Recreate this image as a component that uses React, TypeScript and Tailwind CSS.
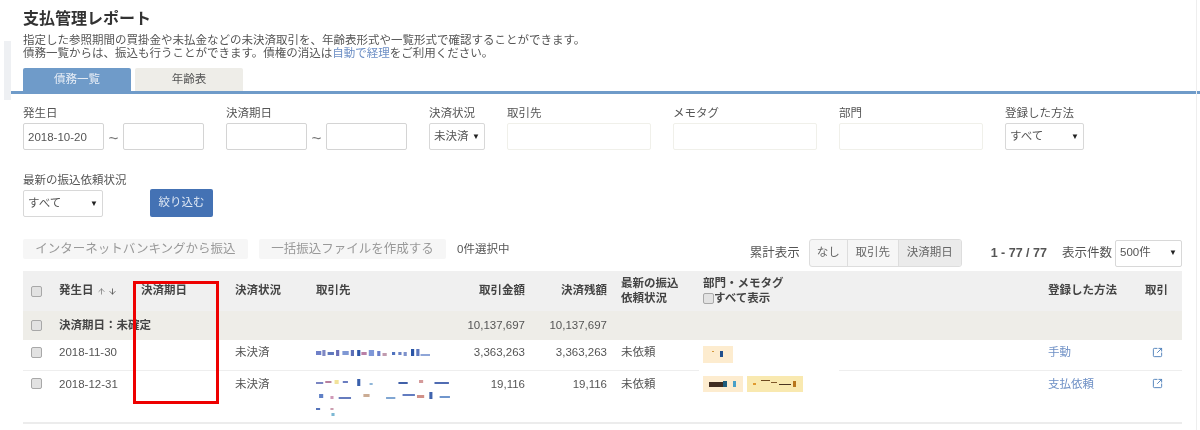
import { ArrowDown, ArrowUp, SquareArrowOutUpRight } from "lucide-react";

type Block = [number, number, number, number, string];

const nameOne: Block[] = [
  [0, 2, 5, 4, "#6f80c8"], [6, 1, 3, 6, "#7f88c4"], [11, 3, 6, 3, "#5f78bc"], [19, 1, 3, 6, "#6b70b8"],
  [25, 2, 6, 4, "#7f98d4"], [33, 1, 3, 6, "#5d70b8"], [39, 1, 3, 6, "#2f58a8"], [43, 3, 5, 3, "#b97fa6"],
  [50, 1, 5, 6, "#7f98d8"], [58, 2, 3, 5, "#6c80ca"], [63, 4, 4, 3, "#c09aae"], [72, 3, 3, 3, "#4f72be"],
  [78, 3, 3, 3, "#6b82c2"], [83, 3, 3, 4, "#7e92cc"], [90, 0, 3, 7, "#2a55a6"], [95, 0, 3, 7, "#5d78be"],
  [99, 5, 9, 2, "#8fa6d8"],
];

const nameTwo: Block[] = [
  [0, 4, 7, 2, "#7a85c2"], [9, 3, 6, 2, "#b8809e"], [18, 2, 4, 4, "#f2e29a"], [26, 3, 5, 2, "#6a7dc0"],
  [40, 1, 3, 7, "#3a60ac"], [52, 5, 3, 2, "#8fb6d8"], [80, 4, 9, 2, "#4060a8"], [100, 2, 4, 3, "#d49a9a"],
  [115, 4, 14, 2, "#506cb2"], [3, 16, 4, 4, "#5f80c6"], [14, 18, 3, 3, "#d09ab8"], [22, 19, 12, 2, "#667cbe"],
  [46, 16, 6, 3, "#cbac94"], [68, 19, 9, 2, "#80a6d2"], [84, 16, 12, 2, "#627cc0"], [98, 17, 7, 3, "#d09088"],
  [110, 14, 3, 7, "#4064ae"], [120, 18, 10, 2, "#7096cc"], [0, 30, 4, 2, "#5674ba"], [14, 30, 3, 2, "#cc9eb0"],
  [15, 35, 3, 3, "#7cb8d4"],
];

const tagOne: Block[] = [[9, 5, 2, 1, "#d59a3c"], [17, 5, 3, 6, "#214f8c"]];
const tagTwo: Block[] = [[6, 6, 14, 5, "#3f2c20"], [20, 5, 4, 6, "#1d5c7c"], [30, 5, 3, 6, "#4aa0c8"]];
const tagThree: Block[] = [[6, 7, 3, 2, "#e09a30"], [14, 4, 9, 1, "#6d4a20"], [24, 6, 6, 1, "#80582a"], [32, 8, 12, 1, "#4a3420"], [46, 5, 3, 6, "#b8761c"]];

function Mosaic({ blocks, w, h, vw }: { blocks: Block[]; w: number; h: number; vw?: number }) {
  return (
    <svg width={w} height={h} viewBox={`0 0 ${vw ?? w} ${h}`} preserveAspectRatio="none" className="block">
      {blocks.map(([x, y, bw, bh, fill], i) => (
        <rect key={i} x={x} y={y} width={bw} height={bh} fill={fill} />
      ))}
    </svg>
  );
}

function Check() {
  return <span className="block h-[11px] w-[11px] rounded-[2px] border border-[#a8a8a8] bg-[#e2e2e2]" />;
}

function Field({ label, children, className }: { label: string; children: React.ReactNode; className?: string }) {
  return (
    <div className={className}>
      <div className="h-[18px] leading-[16px] text-[#555]">{label}</div>
      {children}
    </div>
  );
}

function DateBox({ value }: { value?: string }) {
  return (
    <input
      readOnly
      defaultValue={value}
      className="h-[27px] w-[81px] rounded-[2px] border border-[#d4d4d4] bg-white px-[4px] text-[11.5px] text-[#555] outline-none"
    />
  );
}

function Select({ value, className }: { value: string; className: string }) {
  return (
    <div className={`flex h-[27px] items-center justify-between rounded-[2px] border border-[#d8d8d8] bg-white pl-[4px] pr-[4px] text-[#555] ${className}`}>
      <span>{value}</span>
      <span className="text-[8px] text-[#222]">▼</span>
    </div>
  );
}

function Tilde() {
  return <span className="mt-[5px] w-[19px] text-center text-[17px] leading-[22px] text-[#777]">~</span>;
}

export default function App() {
  return (
    <div className="relative h-[430px] w-[1200px] overflow-hidden bg-white pl-[23px] text-[11.5px] text-[#444] blur-[0.5px] [font-family:'Liberation_Sans','Noto_Sans_CJK_JP',sans-serif]">
      <div className="absolute left-[4px] top-[41px] h-[59px] w-[7px] bg-[#eef0f3]" />
      <div className="absolute right-[3px] top-0 h-full w-px bg-[#eeeeee]" />

      <div className="h-[68px] pt-[10px]">
        <h1 className="text-[16px] font-bold leading-[18px] text-[#333]">支払管理レポート</h1>
        <p className="mt-[6px] leading-[13px] text-[#555]">
          指定した参照期間の買掛金や未払金などの未決済取引を、年齢表形式や一覧形式で確認することができます。
          <br />
          債務一覧からは、振込も行うことができます。債権の消込は<span className="text-[#6d8fc5]">自動で経理</span>をご利用ください。
        </p>
      </div>

      <div className="flex h-[23px] gap-[4px]">
        <div className="flex w-[108px] items-center justify-center rounded-t-[2px] bg-[#6f9bc9] text-[#e8eef6]">債務一覧</div>
        <div className="flex w-[108px] items-center justify-center rounded-t-[2px] bg-[#eeede8] text-[#555]">年齢表</div>
      </div>
      <div className="-ml-[12px] h-[3px] bg-[#6f9bc9]" />

      <div className="mt-[11px] flex h-[45px]">
        <Field label="発生日" className="w-[203px]">
          <div className="flex">
            <DateBox value="2018-10-20" />
            <Tilde />
            <DateBox />
          </div>
        </Field>
        <Field label="決済期日" className="w-[203px]">
          <div className="flex">
            <DateBox />
            <Tilde />
            <DateBox />
          </div>
        </Field>
        <Field label="決済状況" className="w-[78px]">
          <Select value="未決済" className="w-[56px]" />
        </Field>
        <Field label="取引先" className="w-[166px]">
          <div className="h-[27px] w-[144px] rounded-[2px] border border-[#f0f0ea]" />
        </Field>
        <Field label="メモタグ" className="w-[166px]">
          <div className="h-[27px] w-[144px] rounded-[2px] border border-[#f0f0ea]" />
        </Field>
        <Field label="部門" className="w-[166px]">
          <div className="h-[27px] w-[144px] rounded-[2px] border border-[#f0f0ea]" />
        </Field>
        <Field label="登録した方法">
          <Select value="すべて" className="w-[79px]" />
        </Field>
      </div>

      <div className="mt-[20px] flex h-[47px] items-end">
        <Field label="最新の振込依頼状況" className="w-[127px]">
          <Select value="すべて" className="w-[80px]" />
        </Field>
        <button className="h-[28px] w-[63px] rounded-[2px] bg-[#4472b4] text-[#dfe8f4]">絞り込む</button>
      </div>

      <div className="mt-[22px] flex h-[28px] w-[1159px]">
        <div className="flex h-[20px] w-[225px] items-center justify-center rounded-[2px] bg-[#f6f6f6] text-[12.5px] text-[#999]">インターネットバンキングから振込</div>
        <div className="ml-[11px] flex h-[20px] w-[187px] items-center justify-center rounded-[2px] bg-[#f6f6f6] text-[12.5px] text-[#999]">一括振込ファイルを作成する</div>
        <span className="ml-[11px] mt-[2px] text-[#555]">0件選択中</span>
        <div className="ml-auto flex items-center">
          <span className="mr-[9px] text-[12.5px] text-[#555]">累計表示</span>
          <div className="flex h-[28px] overflow-hidden rounded-[3px] border border-[#dddddd] bg-[#f6f6f6] text-[#666]">
            <span className="flex w-[38px] items-center justify-center border-r border-[#dddddd]">なし</span>
            <span className="flex w-[51px] items-center justify-center border-r border-[#dddddd]">取引先</span>
            <span className="flex w-[62px] items-center justify-center bg-[#ebebeb]">決済期日</span>
          </div>
          <span className="ml-[29px] text-[12.5px] font-bold text-[#555]">1 - 77 / 77</span>
          <span className="ml-[15px] mr-[3px] text-[12.5px] text-[#555]">表示件数</span>
          <Select value="500件" className="w-[67px]" />
        </div>
      </div>

      <div className="mt-[4px] w-[1159px] border-b-2 border-[#ececec]">
        <table className="w-full table-fixed border-collapse">
          <colgroup>
            <col className="w-[32px]" />
            <col className="w-[82px]" />
            <col className="w-[94px]" />
            <col className="w-[81px]" />
            <col className="w-[138px]" />
            <col className="w-[79px]" />
            <col className="w-[82px]" />
            <col className="w-[88px]" />
            <col className="w-[140px]" />
            <col className="w-[205px]" />
            <col className="w-[97px]" />
            <col className="w-[41px]" />
          </colgroup>
          <thead>
            <tr className="h-[40px] bg-[#f0f0f0] text-left font-bold text-[#444]">
              <th className="pl-[8px]"><Check /></th>
              <th className="pl-[4px]">
                <span className="flex items-center">
                  発生日
                  <ArrowUp size={9} className="ml-[3px] text-[#777]" />
                  <ArrowDown size={9} className="ml-[2px] text-[#444]" />
                </span>
              </th>
              <th className="pl-[4px]">決済期日</th>
              <th className="pl-[4px]">決済状況</th>
              <th className="pl-[4px]">取引先</th>
              <th className="pr-[4px] text-right">取引金額</th>
              <th className="pr-[4px] text-right">決済残額</th>
              <th className="pl-[10px] leading-[15px]">最新の振込<br />依頼状況</th>
              <th colSpan={2} className="pl-[4px] leading-[15px]">
                部門・メモタグ
                <span className="flex items-center"><Check />すべて表示</span>
              </th>
              <th className="pl-[4px]">登録した方法</th>
              <th className="pl-[4px]">取引</th>
            </tr>
          </thead>
          <tbody>
            <tr className="h-[29px] bg-[#eeede8]">
              <td className="pl-[8px]"><Check /></td>
              <td colSpan={4} className="pl-[4px] font-bold">決済期日：未確定</td>
              <td className="pr-[4px] text-right text-[#555]">10,137,697</td>
              <td className="pr-[4px] text-right text-[#555]">10,137,697</td>
              <td colSpan={5} />
            </tr>
            <tr className="h-[30px] align-top text-[#555]">
              <td className="pl-[8px] pt-[7px]"><Check /></td>
              <td className="pl-[4px] pt-[4px]">2018-11-30</td>
              <td />
              <td className="pl-[4px] pt-[4px]">未決済</td>
              <td className="pl-[4px] pt-[9px]"><Mosaic blocks={nameOne} w={114} h={8} vw={108} /></td>
              <td className="pr-[4px] pt-[4px] text-right">3,363,263</td>
              <td className="pr-[4px] pt-[4px] text-right">3,363,263</td>
              <td className="pl-[10px] pt-[4px]">未依頼</td>
              <td className="pl-[4px] pt-[6px]">
                <span className="block h-[17px] w-[30px] bg-[#fdeccf]"><Mosaic blocks={tagOne} w={30} h={17} /></span>
              </td>
              <td />
              <td className="pl-[4px] pt-[4px] text-[#6d8fc5]">手動</td>
              <td className="pl-[11px] pt-[7px]"><SquareArrowOutUpRight size={11} className="text-[#4a7db8]" /></td>
            </tr>
            <tr className="h-[52px] align-top text-[#555]">
              <td className="border-t border-[#eeeeee] pl-[8px] pt-[7px]"><Check /></td>
              <td className="border-t border-[#eeeeee] pl-[4px] pt-[5px]">2018-12-31</td>
              <td className="border-t border-[#eeeeee]" />
              <td className="border-t border-[#eeeeee] pl-[4px] pt-[5px]">未決済</td>
              <td className="border-t border-[#eeeeee] pl-[4px] pt-[7px]"><Mosaic blocks={nameTwo} w={136} h={38} vw={132} /></td>
              <td className="border-t border-[#eeeeee] pr-[4px] pt-[5px] text-right">19,116</td>
              <td className="border-t border-[#eeeeee] pr-[4px] pt-[5px] text-right">19,116</td>
              <td className="border-t border-[#eeeeee] pl-[10px] pt-[5px]">未依頼</td>
              <td className="pl-[4px] pt-[6px]">
                <span className="flex gap-[4px]">
                  <span className="block h-[16px] w-[40px] bg-[#fdeccf]"><Mosaic blocks={tagTwo} w={40} h={16} /></span>
                  <span className="block h-[16px] w-[56px] bg-[#f9e9b0]"><Mosaic blocks={tagThree} w={56} h={16} /></span>
                </span>
              </td>
              <td className="border-t border-[#eeeeee]" />
              <td className="border-t border-[#eeeeee] pl-[4px] pt-[5px] text-[#6d8fc5]">支払依頼</td>
              <td className="border-t border-[#eeeeee] pl-[11px] pt-[7px]"><SquareArrowOutUpRight size={11} className="text-[#4a7db8]" /></td>
            </tr>
          </tbody>
        </table>
      </div>

      <div className="absolute left-[133px] top-[281px] h-[123px] w-[86px] border-[3px] border-[#ee0000]" />
    </div>
  );
}
